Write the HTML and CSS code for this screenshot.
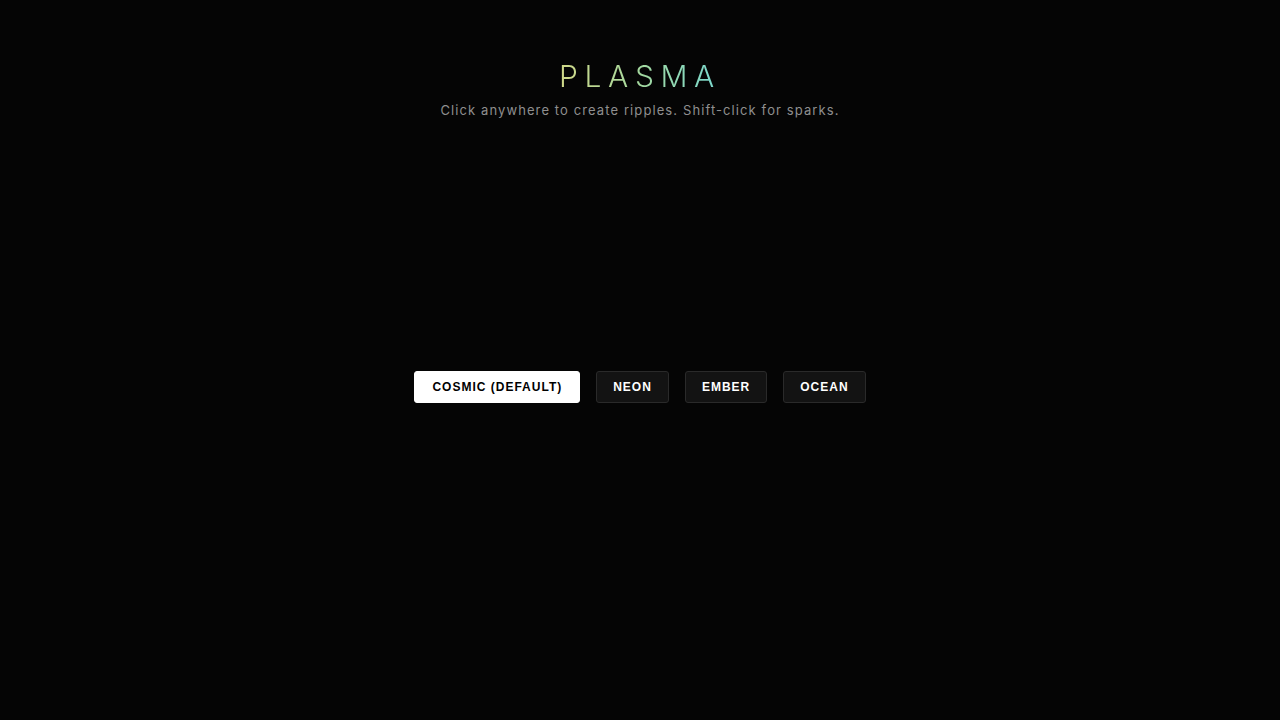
FILE: index.html
```html
<!DOCTYPE html>
<html lang="en">
<head>
<meta charset="utf-8">
<title>Plasma</title>
<link rel="stylesheet" href="styles.css">
</head>
<body>
<main class="page">
  <header class="header">
    <h1 class="title">PLASMA</h1>
    <p class="subtitle">Click anywhere to create ripples. Shift-click for sparks.</p>
  </header>
  <nav class="controls">
    <button class="btn btn-active">Cosmic (Default)</button>
    <button class="btn">Neon</button>
    <button class="btn">Ember</button>
    <button class="btn">Ocean</button>
  </nav>
</main>
</body>
</html>
```

FILE: styles.css
```css
html, body {
  margin: 0;
  padding: 0;
  background: #050505;
  height: 100%;
}
.page {
  display: flex;
  flex-direction: column;
  align-items: center;
  height: 720px;
  font-family: Inter, "Liberation Sans", sans-serif;
}
.header {
  display: flex;
  flex-direction: column;
  align-items: center;
  padding-top: 58px;
}
.title {
  margin: 0;
  font-family: Inter, sans-serif;
  font-weight: 300;
  font-size: 30px;
  line-height: 36px;
  letter-spacing: 0.22em;
  background: linear-gradient(90deg, #d0d888 0%, #a4d9a0 50%, #78d8cf 100%);
  -webkit-background-clip: text;
  background-clip: text;
  color: transparent;
}
.subtitle {
  margin: 8px 0 0;
  font-size: 13px;
  line-height: 16px;
  letter-spacing: 1.1px;
  color: #8f8f8f;
}
.controls {
  display: flex;
  gap: 16px;
  margin-top: 253px;
}
.btn {
  height: 32px;
  padding: 0 16px;
  font-family: "Liberation Sans", Arial, sans-serif;
  font-weight: 700;
  font-size: 12px;
  letter-spacing: 1px;
  text-transform: uppercase;
  color: #ffffff;
  background: #131313;
  border: 1px solid #2a2a2a;
  border-radius: 3px;
  cursor: pointer;
}
.btn-active {
  padding: 0 17px;
  background: #ffffff;
  color: #000000;
  border-color: #ffffff;
}
```
